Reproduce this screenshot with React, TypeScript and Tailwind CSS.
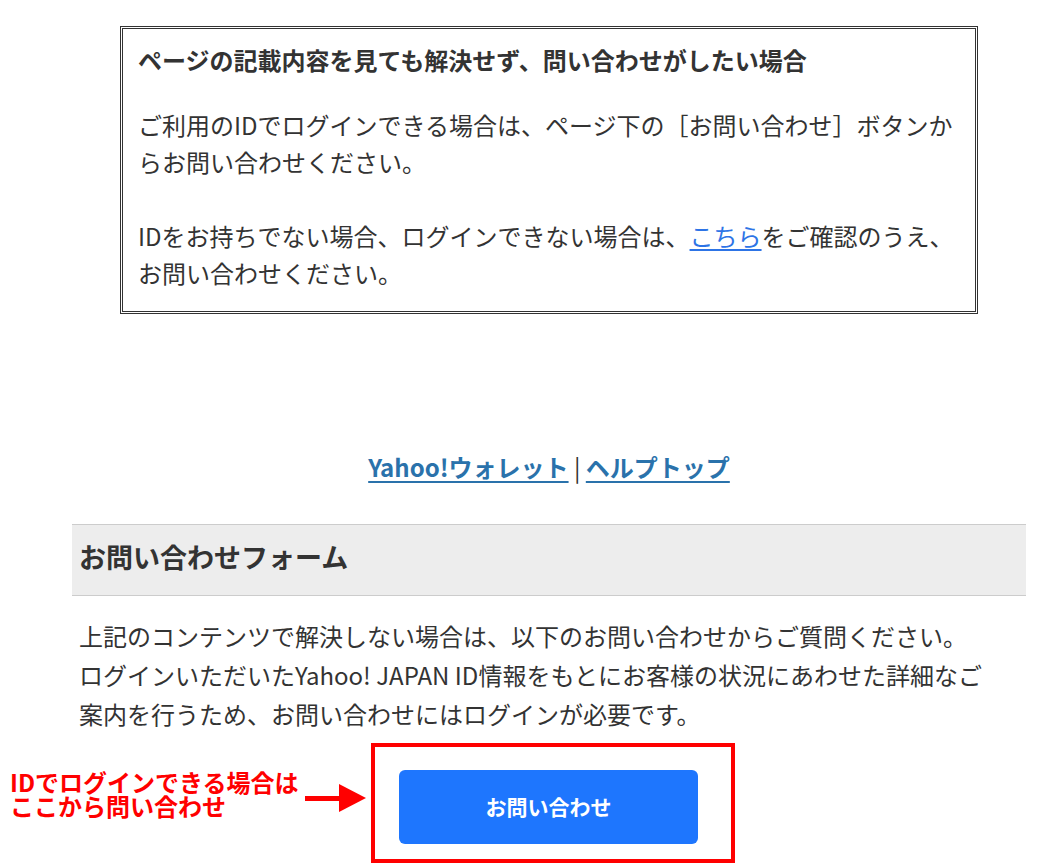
import React from "react";

function NoticeBox() {
  return (
    <div className="mx-[48px] mt-[26px] border-[3px] border-double border-[#333] px-[15px] pt-[13px] pb-[20px]">
      <p className="text-[24px] leading-[36px] font-bold text-[#333] whitespace-nowrap">
        ページの記載内容を見ても解決せず、問い合わせがしたい場合
      </p>
      <p className="mt-[28px] text-[24px] leading-[37px] text-[#333] whitespace-nowrap">
        ご利用のIDでログインできる場合は、ページ下の［お問い合わせ］ボタンか
        <br />
        らお問い合わせください。
        <br />
        <br />
        IDをお持ちでない場合、ログインできない場合は、
        <a href="#" className="text-[#2d74e6] underline underline-offset-[3px]">
          こちら
        </a>
        をご確認のうえ、
        <br />
        お問い合わせください。
      </p>
    </div>
  );
}

function Arrow() {
  // red arrow pointing at the button
  return (
    <svg width="62" height="28" viewBox="0 0 62 28" className="block">
      <rect x="0" y="12" width="36" height="5" fill="#ff0000" />
      <polygon points="34,0 61,14 34,28" fill="#ff0000" />
    </svg>
  );
}

export default function App() {
  return (
    <div className="min-h-screen bg-white font-['Noto_Sans_CJK_JP','Noto_Sans',sans-serif] text-[#333]">
      <div className="ml-[72px] w-[954px]">
        <NoticeBox />

        <div className="mt-[135px] text-center text-[24px] leading-[36px] font-bold">
          <a href="#" className="text-[#2a72ab] underline underline-offset-[4px]">
            Yahoo!ウォレット
          </a>
          <span className="text-[#333] font-normal"> | </span>
          <a href="#" className="text-[#2a72ab] underline underline-offset-[4px]">
            ヘルプトップ
          </a>
        </div>

        <div className="mt-[39px] border-y border-[#cccccc] bg-[#ededed] pl-[7px] pt-[12px] pb-[18px]">
          <h2 className="text-[27px] leading-[40px] font-bold text-[#333]">お問い合わせフォーム</h2>
        </div>

        <p className="mt-[20px] pl-[7px] text-[24px] leading-[39px] text-[#333] whitespace-nowrap">
          上記のコンテンツで解決しない場合は、以下のお問い合わせからご質問ください。
          <br />
          ログインいただいたYahoo! JAPAN ID情報をもとにお客様の状況にあわせた詳細なご
          <br />
          案内を行うため、お問い合わせにはログインが必要です。
        </p>
      </div>

      <div className="mt-[10px] flex items-start pl-[10px]">
        <div className="mt-[27px] w-[294px] text-[24px] leading-[24px] font-bold text-[#ff0000] whitespace-nowrap">
          IDでログインできる場合は
          <br />
          ここから問い合わせ
        </div>
        <div className="mt-[41px] ml-[1px]">
          <Arrow />
        </div>
        <div className="ml-[4px] border-4 border-[#ff0000] pl-[24px] pr-[33px] pt-[23px] pb-[15px]">
          <button className="flex h-[74px] w-[299px] items-center justify-center rounded-[6px] bg-[#1e76fe] text-[21px] font-bold text-white">
            お問い合わせ
          </button>
        </div>
      </div>
    </div>
  );
}
